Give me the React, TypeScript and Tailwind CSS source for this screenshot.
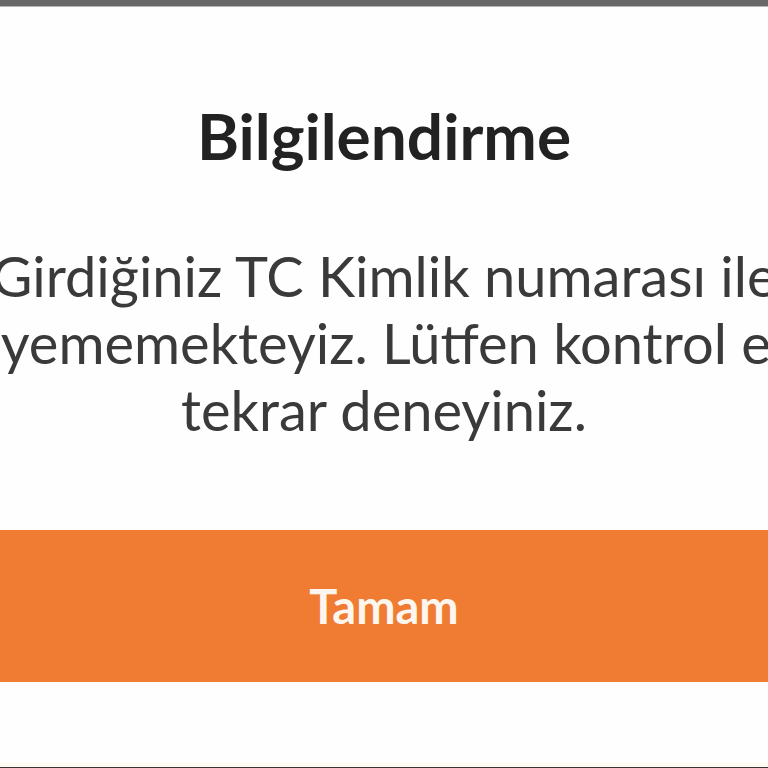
export default function App() {
  return (
    <div className="flex h-[768px] w-[768px] flex-col overflow-hidden bg-[#fefefe] font-['Lato',sans-serif]">
      <div className="h-[7px] shrink-0 border-b border-[#b5b5b5] bg-[#676767]" />

      <div className="flex flex-1 flex-col items-center">
        <h1 className="mt-[93px] text-[64px] font-bold leading-[72px] whitespace-nowrap text-[#222222]">
          Bilgilendirme
        </h1>

        <div className="mt-[70px] flex w-full flex-col items-center text-[56px] leading-[67px] text-[#3a3a3a]">
          <p className="whitespace-nowrap">Girdiğiniz TC Kimlik numarası ile</p>
          <p className="whitespace-nowrap">işleyememekteyiz. Lütfen kontrol edip</p>
          <p className="whitespace-nowrap">tekrar deneyiniz.</p>
        </div>

        <button className="mt-[87px] flex h-[152px] w-full shrink-0 items-center justify-center bg-[#f07c33] text-[47px] font-bold text-[#fdf6ee]">
          Tamam
        </button>
      </div>

      <div className="h-[5px] shrink-0 bg-[#fffaf3]" />
      <div className="h-px shrink-0 bg-[#3d3535]" />
    </div>
  );
}
